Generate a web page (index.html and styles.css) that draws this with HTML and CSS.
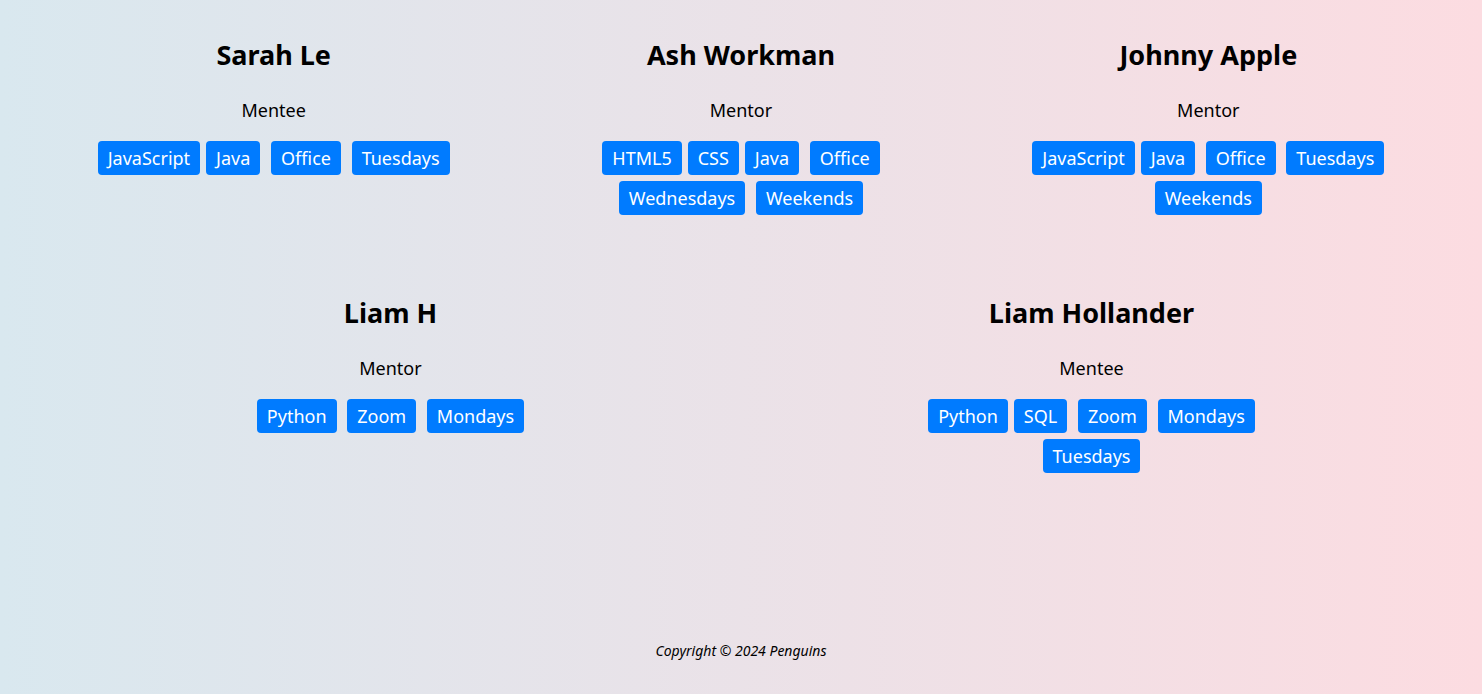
FILE: index.html
```html
<!DOCTYPE html>
<html lang="en">
<head>
<meta charset="utf-8">
<title>Penguins</title>
<link rel="stylesheet" href="styles.css">
</head>
<body>
<main class="page">
  <section class="row">
    <div class="card">
      <h2 class="name">Sarah Le</h2>
      <p class="role">Mentee</p>
      <div class="tags"><span class="badge">JavaScript</span><span class="badge">Java</span> <span class="badge">Office</span> <span class="badge">Tuesdays</span></div>
    </div>
    <div class="card">
      <h2 class="name">Ash Workman</h2>
      <p class="role">Mentor</p>
      <div class="tags"><span class="badge">HTML5</span><span class="badge">CSS</span><span class="badge">Java</span> <span class="badge">Office</span> <span class="badge">Wednesdays</span> <span class="badge">Weekends</span></div>
    </div>
    <div class="card">
      <h2 class="name">Johnny Apple</h2>
      <p class="role">Mentor</p>
      <div class="tags"><span class="badge">JavaScript</span><span class="badge">Java</span> <span class="badge">Office</span> <span class="badge">Tuesdays</span> <span class="badge">Weekends</span></div>
    </div>
  </section>
  <section class="row">
    <div class="card">
      <h2 class="name">Liam H</h2>
      <p class="role">Mentor</p>
      <div class="tags"><span class="badge">Python</span> <span class="badge">Zoom</span> <span class="badge">Mondays</span></div>
    </div>
    <div class="card">
      <h2 class="name">Liam Hollander</h2>
      <p class="role">Mentee</p>
      <div class="tags"><span class="badge">Python</span><span class="badge">SQL</span> <span class="badge">Zoom</span> <span class="badge">Mondays</span> <span class="badge">Tuesdays</span></div>
    </div>
  </section>
</main>
<footer class="footer">Copyright © 2024 Penguins</footer>
</body>
</html>
```
FILE: styles.css
```css
* { box-sizing: border-box; }
html, body { height: 100%; }
body {
  margin: 0;
  min-height: 100vh;
  display: flex;
  flex-direction: column;
  font-family: "Noto Sans", "Open Sans", sans-serif;
  color: #000;
  background: linear-gradient(to right, #d9e8ef, #fcdce1);
}
.page {
  padding: 38px 40px 0;
}
.row {
  display: flex;
  justify-content: space-around;
}
.card {
  flex: 0 0 33.3333%;
  text-align: center;
  padding-bottom: 78px;
}
.name {
  margin: 0;
  font-size: 27px;
  line-height: 34px;
  font-weight: 700;
}
.role {
  margin: 26px 0 16px;
  font-size: 18px;
  line-height: 24px;
}
.tags {
  font-size: 18px;
  line-height: 1;
  padding: 0 30px;
}
.badge {
  display: inline-block;
  vertical-align: top;
  margin: 3px;
  padding: 0 10px;
  height: 34px;
  line-height: 34px;
  background: #007bff;
  color: #fff;
  border-radius: 4px;
  font-size: 18px;
}
.footer {
  margin-top: auto;
  padding-bottom: 35px;
  text-align: center;
  font-size: 14px;
  line-height: 16px;
  font-style: italic;
}
```
